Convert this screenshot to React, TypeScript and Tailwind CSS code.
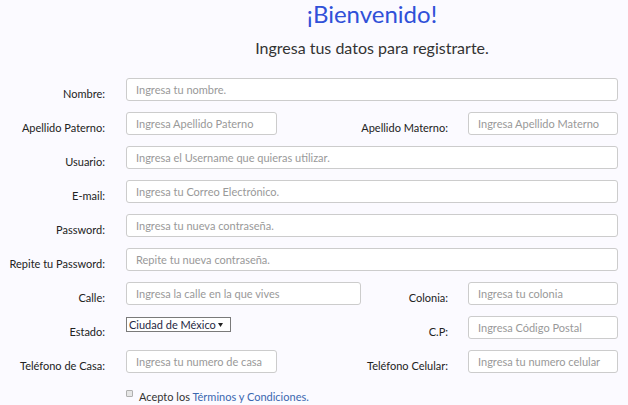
import React from "react";

const inputCls =
  "h-[23px] bg-white border border-[#cccccc] rounded-[3px] pl-[9px] text-[11px] text-[#555] placeholder:text-[#999] outline-none font-['Lato',sans-serif]";

function Label({ children, className = "" }: { children: React.ReactNode; className?: string }) {
  return (
    <label className={"text-right text-[11px] leading-[14px] text-[#222] pt-[9px] whitespace-nowrap " + className}>
      {children}
    </label>
  );
}

function FullRow({ label, placeholder }: { label: string; placeholder: string }) {
  return (
    <div className="flex items-start h-[34px]">
      <Label className="w-[105px]">{label}</Label>
      <input className={inputCls + " ml-[21px] w-[492px]"} placeholder={placeholder} />
    </div>
  );
}

function SplitRow({
  l1,
  p1,
  w1,
  l2,
  p2,
  left,
}: {
  l1: string;
  p1?: string;
  w1?: string;
  l2: string;
  p2: string;
  left?: React.ReactNode;
}) {
  return (
    <div className="flex items-start h-[34px]">
      <Label className="w-[105px]">{l1}</Label>
      <div className="ml-[21px] flex">
        {left ?? <input className={inputCls + " " + w1} placeholder={p1} />}
      </div>
      <Label className="flex-1">{l2}</Label>
      <input className={inputCls + " ml-[20px] w-[150px]"} placeholder={p2} />
    </div>
  );
}

export default function App() {
  return (
    <div className="w-[628px] h-[405px] bg-[#fbfaff] overflow-hidden font-['Lato',sans-serif]">
      <div className="ml-[116px] w-[512px] text-center">
        <h1 className="text-[24px] leading-[28px] text-[#3050d8] font-normal">¡Bienvenido!</h1>
        <p className="mt-[10px] text-[16px] leading-[20px] text-[#333]">Ingresa tus datos para registrarte.</p>
      </div>
      <form className="mt-[20px] pr-[10px]">
        <FullRow label="Nombre:" placeholder="Ingresa tu nombre." />
        <SplitRow
          l1="Apellido Paterno:"
          p1="Ingresa Apellido Paterno"
          w1="w-[151px]"
          l2="Apellido Materno:"
          p2="Ingresa Apellido Materno"
        />
        <FullRow label="Usuario:" placeholder="Ingresa el Username que quieras utilizar." />
        <FullRow label="E-mail:" placeholder="Ingresa tu Correo Electrónico." />
        <FullRow label="Password:" placeholder="Ingresa tu nueva contraseña." />
        <FullRow label="Repite tu Password:" placeholder="Repite tu nueva contraseña." />
        <SplitRow
          l1="Calle:"
          p1="Ingresa la calle en la que vives"
          w1="w-[235px]"
          l2="Colonia:"
          p2="Ingresa tu colonia"
        />
        <SplitRow
          l1="Estado:"
          l2="C.P:"
          p2="Ingresa Código Postal"
          left={
            <div className="mt-[1px] w-[105px] h-[15px] border border-[#7a7a7a] bg-white flex items-center pl-[2px] pr-[7px]">
              <span className="text-[11px] leading-[13px] text-[#1f2a44] whitespace-nowrap">Ciudad de México</span>
              <svg width="5" height="4" viewBox="0 0 5 4" className="ml-auto shrink-0">
                <path d="M0 0 L5 0 L2.5 4 Z" fill="#222" />
              </svg>
            </div>
          }
        />
        <SplitRow
          l1="Teléfono de Casa:"
          p1="Ingresa tu numero de casa"
          w1="w-[151px]"
          l2="Teléfono Celular:"
          p2="Ingresa tu numero celular"
        />
        <div className="mt-[6px] ml-[126px] flex items-start">
          <span className="w-[7px] h-[7px] border border-[#b0b0b0] bg-[#e6e6e6] rounded-[1px]" />
          <span className="ml-[6px] text-[11px] leading-[14px] text-[#333]">
            Acepto los <a className="text-[#3a67b0]">Términos y Condiciones.</a>
          </span>
        </div>
      </form>
    </div>
  );
}
